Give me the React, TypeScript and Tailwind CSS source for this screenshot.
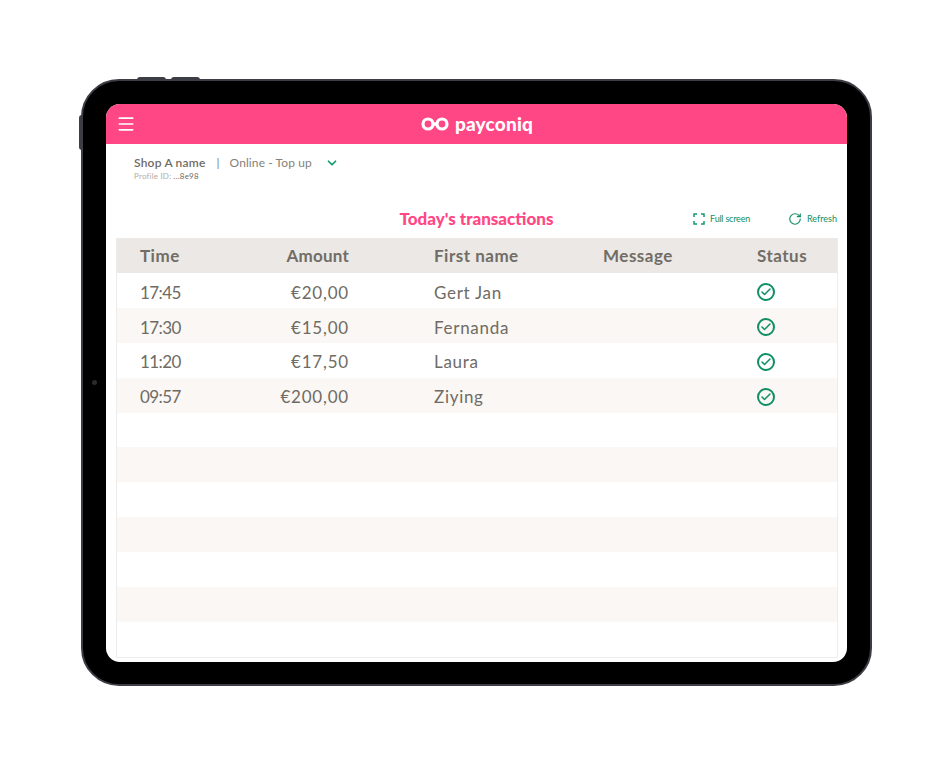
import { Check, ChevronDown, Menu, RotateCw } from "lucide-react"

const rows = [
  { time: "17:45", amount: "€20,00", name: "Gert Jan" },
  { time: "17:30", amount: "€15,00", name: "Fernanda" },
  { time: "11:20", amount: "€17,50", name: "Laura" },
  { time: "09:57", amount: "€200,00", name: "Ziying" },
  null,
  null,
  null,
  null,
  null,
  null,
  null,
]

const FullScreenIcon = () => (
  <svg width="12" height="12" viewBox="0 0 12 12" fill="none" stroke="#0f9b6c" strokeWidth="1.5">
    <path d="M1 4V1h3M8 1h3v3M11 8v3H8M4 11H1V8" />
  </svg>
)

// two rings joined in the middle, like an infinity sign
const Logo = () => (
  <svg width="28" height="14" viewBox="0 0 28 14" fill="none" stroke="#fff" strokeWidth="3.2">
    <circle cx="7" cy="7" r="5" />
    <circle cx="21" cy="7" r="5" />
    <path d="M11 4.5Q14 7 17 9.500M11 9.500Q14 7 17 4.500" strokeWidth="2" />
  </svg>
)

const StatusIcon = () => (
  <span className="flex h-[18px] w-[18px] items-center justify-center rounded-full border-2 border-[#0f8f63]">
    <Check size={12} strokeWidth={3} className="text-[#0f8f63]" />
  </span>
)

export default function App() {
  return (
    <div className="h-[761px] w-[950px] overflow-hidden bg-white pl-[81px] pt-[79px] font-['Lato',sans-serif]">
      <div className="relative h-[607px] w-[791px] rounded-[38px] border-2 border-[#3d3d45] bg-black p-[23px]">
        <div className="absolute -top-[4px] left-[54px] h-[3px] w-[29px] rounded-t-sm bg-[#3d3d45]" />
        <div className="absolute -top-[4px] left-[88px] h-[3px] w-[29px] rounded-t-sm bg-[#3d3d45]" />
        <div className="absolute -left-[4px] top-[34px] h-[35px] w-[3px] rounded-l-sm bg-[#3d3d45]" />
        <div className="absolute left-[9px] top-[299px] h-[5px] w-[5px] rounded-full bg-[#2a2a2a]" />

        <div className="flex h-[558px] w-[741px] flex-col overflow-hidden rounded-[14px] bg-white">
          <header className="relative flex h-[40px] shrink-0 items-center justify-center bg-[#ff4785]">
            <Menu size={20} strokeWidth={2} className="absolute left-[10px] top-[10px] text-white" />
            <div className="ml-[1px] flex items-center gap-[6px]">
              <Logo />
              <span className="-mt-[2px] text-[19px] font-black leading-none tracking-[0.2px] text-white">payconiq</span>
            </div>
          </header>

          <div className="flex h-[94px] shrink-0 flex-col px-[10px]">
            <div className="pl-[18px] pt-[12px]">
              <div className="flex items-center text-[12px] leading-[14px] text-[#6f6b64]">
                <span className="font-semibold tracking-[0.2px]">Shop A name</span>
                <span className="ml-[11px] text-[#85817a]">|</span>
                <span className="ml-[10px] tracking-[0.1px] text-[#85817a]">Online - Top up</span>
                <ChevronDown size={14} strokeWidth={3} className="ml-[13px] text-[#0f9b6c]" />
              </div>
              <div className="mt-[1px] text-[8px] leading-[11px] tracking-[0.2px] text-[#b0aca4]">
                Profile ID: <span className="text-[#6f6b64]">...8e98</span>
              </div>
            </div>
            <div className="relative mt-[26px] flex items-center justify-center">
              <h1 className="text-[17px] font-black leading-[22px] text-[#ff4785]">Today's transactions</h1>
              <div className="absolute right-0 top-[4px] flex items-center text-[9px] text-[#0f8f63]">
                <FullScreenIcon />
                <span className="ml-[5px] tracking-[-0.2px]">Full screen</span>
                <RotateCw size={14} strokeWidth={2} className="ml-[38px]" />
                <span className="ml-[5px]">Refresh</span>
              </div>
            </div>
          </div>

          <div className="mx-[10px] h-[420px] w-[722px] border-b border-l border-r border-[#eeecea]">
            <div className="flex h-[35px] items-center bg-[#ebe8e5] text-[17px] font-bold tracking-[0.5px] text-[#716d66]">
              <span className="w-[107px] pl-[23px]">Time</span>
              <span className="w-[125px] text-right tracking-[0.2px]">Amount</span>
              <span className="ml-[85px] w-[169px]">First name</span>
              <span className="w-[154px]">Message</span>
              <span>Status</span>
            </div>
            {rows.map((row, i) => (
              <div
                key={i}
                className={`flex h-[34.9px] items-center pt-[4px] text-[17px] tracking-[0.7px] text-[#6f6b64] ${i % 2 === 1 ? "bg-[#faf7f4]" : "bg-white"}`}
              >
                {row && (
                  <>
                    <span className="w-[107px] pl-[23px] tracking-[-0.6px]">{row.time}</span>
                    <span className="w-[125px] text-right tracking-[0.8px]">{row.amount}</span>
                    <span className="ml-[85px] w-[169px]">{row.name}</span>
                    <span className="w-[154px]" />
                    <StatusIcon />
                  </>
                )}
              </div>
            ))}
          </div>
        </div>
      </div>
    </div>
  )
}
